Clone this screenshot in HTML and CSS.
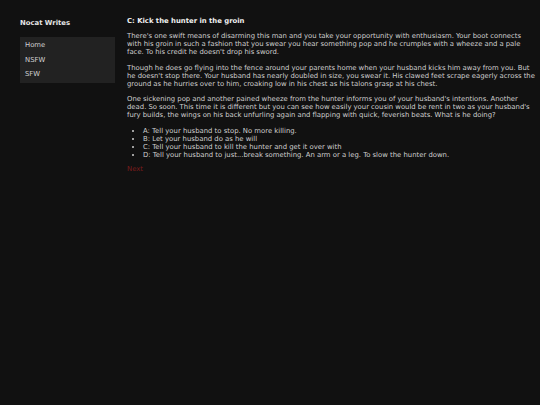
FILE: index.html
```html
<!DOCTYPE html>
<html lang="en">

<head>
  <meta charset="UTF-8">
  <meta name="viewport" content="width=device-width, initial-scale=1.0">
  <title>Nocat Writes</title>
  <link rel="stylesheet" href="styles.css">
</head>

<body>
  <div class="page">
    <div class="sidebar">
      <h1 class="site-title">Nocat Writes</h1>
      <ul class="nav">
        <li><a href="#">Home</a></li>
        <li><a href="#">NSFW</a></li>
        <li><a href="#">SFW</a></li>
      </ul>
    </div>

    <div class="content">
      <h2>C: Kick the hunter in the groin</h2>
      <p>There's one swift means of disarming this man and you take your opportunity with enthusiasm. Your boot connects with his groin in such a fashion that you swear you hear something pop and he crumples with a wheeze and a pale face. To his credit he doesn't drop his sword.</p>
      <p>Though he does go flying into the fence around your parents home when your husband kicks him away from you. But he doesn't stop there. Your husband has nearly doubled in size, you swear it. His clawed feet scrape eagerly across the ground as he hurries over to him, croaking low in his chest as his talons grasp at his chest.</p>
      <p>One sickening pop and another pained wheeze from the hunter informs you of your husband's intentions. Another dead. So soon. This time it is different but you can see how easily your cousin would be rent in two as your husband's fury builds, the wings on his back unfurling again and flapping with quick, feverish beats. What is he doing?</p>
      <ul class="choices">
        <li>A: Tell your husband to stop. No more killing.</li>
        <li>B: Let your husband do as he will</li>
        <li>C: Tell your husband to kill the hunter and get it over with</li>
        <li>D: Tell your husband to just...break something. An arm or a leg. To slow the hunter down.</li>
      </ul>
      <a class="next" href="#">Next</a>
    </div>
  </div>
</body>

</html>
```

FILE: styles.css
```css
body {
  font-family: "DejaVu Sans", Verdana, sans-serif;
  font-size: 6.86px;
  line-height: 8px;
  background-color: #111111;
  color: #cfcfcf;
  margin: 0;
}
.page {
  display: grid;
  grid-template-columns: 95px 1fr;
  gap: 12px;
  padding: 17px 4px 0 20px;
}
.site-title {
  font-size: 6.86px;
  line-height: 8px;
  color: #e6e6e6;
  margin: 2px 0 10px;
}
.nav {
  list-style: none;
  margin: 0;
  padding: 1px 0;
  background-color: #222222;
}
.nav li {
  padding: 3.25px 5px;
}
.nav a {
  color: #d0d0d0;
  text-decoration: none;
}
.content h2 {
  font-size: 6.86px;
  color: #f0f0f0;
  margin: 0 0 7px;
}
.content p {
  margin: 0 0 7.5px;
  word-spacing: -0.1px;
}
.choices {
  margin: 0 0 6px;
  padding-left: 16px;
}
.next {
  color: #7a1c1c;
  text-decoration: none;
}
```
